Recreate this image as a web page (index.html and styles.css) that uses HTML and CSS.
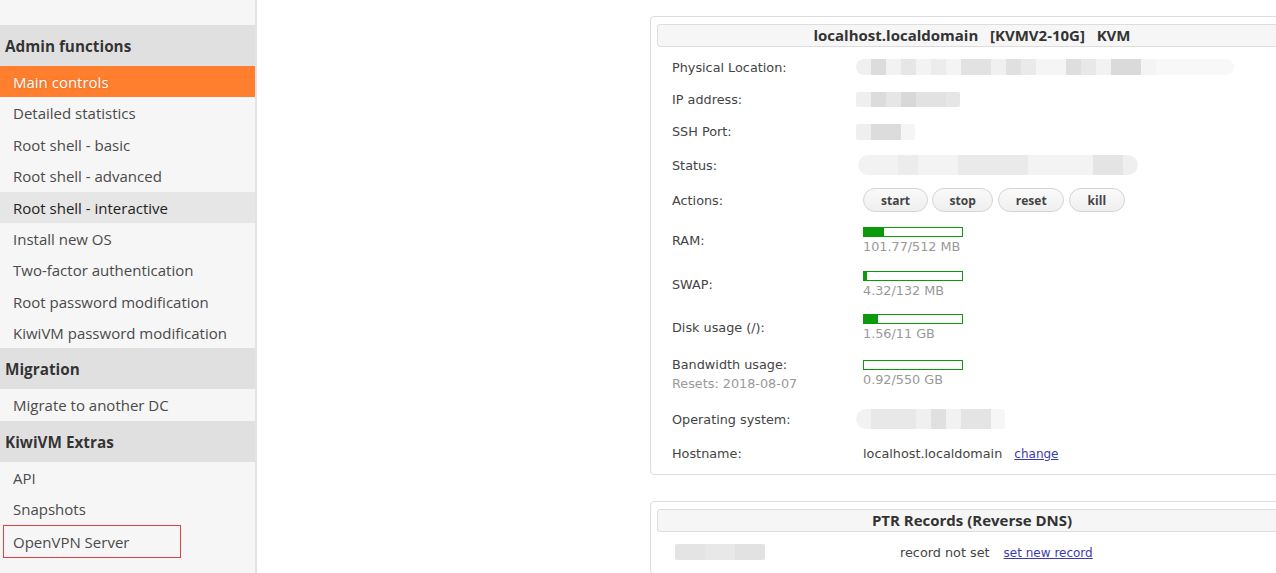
FILE: index.html
```html
<!DOCTYPE html>
<html>
<head>
<meta charset="utf-8">
<title>KiwiVM Control Panel</title>
<link rel="stylesheet" href="styles.css">
</head>
<body>
<div class="layout">
  <nav class="sidebar">
    <div class="side-top"></div>
    <div class="side-head">Admin functions</div>
    <a class="side-item active">Main controls</a>
    <a class="side-item">Detailed statistics</a>
    <a class="side-item">Root shell - basic</a>
    <a class="side-item">Root shell - advanced</a>
    <a class="side-item hover">Root shell - interactive</a>
    <a class="side-item">Install new OS</a>
    <a class="side-item">Two-factor authentication</a>
    <a class="side-item">Root password modification</a>
    <a class="side-item">KiwiVM password modification</a>
    <div class="side-head">Migration</div>
    <a class="side-item">Migrate to another DC</a>
    <div class="side-head">KiwiVM Extras</div>
    <a class="side-item">API</a>
    <a class="side-item">Snapshots</a>
    <a class="side-item marked">OpenVPN Server</a>
  </nav>
  <main class="content">
    <section class="panel">
      <div class="panel-head">localhost.localdomain&nbsp;&nbsp;&nbsp;[KVMV2-10G]&nbsp;&nbsp;&nbsp;KVM</div>
      <div class="rows">
        <div class="row r32"><div class="lbl">Physical Location:</div><div class="val"><span class="blur b-loc"></span></div></div>
        <div class="row r32"><div class="lbl">IP address:</div><div class="val"><span class="blur b-ip"></span></div></div>
        <div class="row r33"><div class="lbl">SSH Port:</div><div class="val"><span class="blur b-ssh"></span></div></div>
        <div class="row r34"><div class="lbl">Status:</div><div class="val"><span class="blur b-status"></span></div></div>
        <div class="row r36"><div class="lbl">Actions:</div>
          <div class="val btns">
            <button class="btn">start</button>
            <button class="btn">stop</button>
            <button class="btn">reset</button>
            <button class="btn">kill</button>
          </div>
        </div>
        <div class="row r45"><div class="lbl">RAM:</div>
          <div class="val"><div class="bar"><div class="fill" style="width:20%"></div></div><div class="muted">101.77/512 MB</div></div>
        </div>
        <div class="row r43"><div class="lbl">SWAP:</div>
          <div class="val"><div class="bar"><div class="fill" style="width:3%"></div></div><div class="muted">4.32/132 MB</div></div>
        </div>
        <div class="row r43"><div class="lbl">Disk usage (/):</div>
          <div class="val"><div class="bar"><div class="fill" style="width:14%"></div></div><div class="muted">1.56/11 GB</div></div>
        </div>
        <div class="row r48"><div class="lbl">Bandwidth usage:<div class="muted lbl-sub">Resets: 2018-08-07</div></div>
          <div class="val"><div class="bar"><div class="fill" style="width:0%"></div></div><div class="muted">0.92/550 GB</div></div>
        </div>
        <div class="row r42"><div class="lbl">Operating system:</div><div class="val"><span class="blur b-os"></span></div></div>
        <div class="row r27"><div class="lbl">Hostname:</div><div class="val">localhost.localdomain <a class="link">change</a></div></div>
      </div>
    </section>
    <section class="panel ptr">
      <div class="panel-head">PTR Records (Reverse DNS)</div>
      <div class="ptr-row">
        <span class="blur b-ptr"></span>
        <span class="ptr-text">record not set <a class="link">set new record</a></span>
      </div>
    </section>
  </main>
</div>
</body>
</html>
```

FILE: styles.css
```css
html, body {
  margin: 0;
  padding: 0;
  background: #fff;
  overflow: hidden;
}
body {
  font-family: "Open Sans", "Noto Sans", sans-serif;
  color: #444;
}
.layout {
  display: flex;
  min-height: 573px;
  width: 1276px;
  overflow: hidden;
}
.sidebar {
  width: 255px;
  flex: none;
  background: #f6f6f6;
  border-right: 2px solid #e3e3e3;
  display: flex;
  flex-direction: column;
  min-height: 573px;
}
.side-top { height: 25px; }
.side-head {
  height: 41px;
  line-height: 39px;
  padding-top: 2px;
  box-sizing: border-box;
  background: #e0e0e0;
  padding-left: 5px;
  font-weight: 700;
  font-size: 15.3px;
  color: #333;
  text-shadow: 0 0 1px rgba(255,255,255,.8);
}
.side-item {
  display: block;
  height: 31.375px;
  line-height: 29.375px;
  padding-top: 2px;
  padding-left: 13px;
  font-size: 15px;
  color: #4a4a4a;
  text-decoration: none;
  box-sizing: border-box;
}
.side-item.active {
  background: #ff7f2f;
  color: #fff;
  text-shadow: 0 0 2px rgba(120,50,0,.35);
}
.side-item.hover {
  background: #e6e6e6;
  color: #222;
}
.side-item.marked {
  width: 178px;
  margin-left: 3px;
  padding-left: 9px;
  border: 1px solid #e04040;
  height: 33px;
  line-height: 29px;
}
.content {
  flex: 1;
  padding: 16px 0 0 393px;
  min-width: 0;
}
.panel {
  width: 644px;
  border: 1px solid #ddd;
  border-radius: 4px;
  padding: 7px 6px 7px;
  box-sizing: border-box;
  background: #fff;
}
.panel-head {
  height: 23px;
  line-height: 21px;
  box-sizing: border-box;
  border: 1px solid #ddd;
  border-radius: 3px;
  background: #f6f6f6;
  text-align: center;
  font-weight: 700;
  font-size: 15px;
  color: #333;
}
.rows {
  padding-top: 4px;
  font-family: "DejaVu Sans", sans-serif;
  font-size: 12.8px;
  color: #444;
}
.row {
  display: flex;
  align-items: center;
}
.r27 { height: 27px; }
.r32 { height: 32px; }
.r33 { height: 33px; }
.r34 { height: 34px; }
.r36 { height: 36px; }
.r42 { height: 42px; }
.r43 { height: 43px; }
.r45 { height: 45px; }
.r48 { height: 49px; }
.lbl {
  width: 206px;
  padding-left: 15px;
  box-sizing: border-box;
  flex: none;
}
.lbl-sub { margin-top: 4px; }
.val { flex: 1; }
.muted { color: #999; }
.bar {
  width: 100px;
  height: 10px;
  box-sizing: border-box;
  border: 1px solid #0a9a0a;
  background: #fff;
  margin-bottom: 2px;
}
.fill {
  height: 100%;
  background: #0a9a0a;
}
.btns {
  display: flex;
  gap: 4px;
}
.btn {
  font-family: "Open Sans", "Noto Sans", sans-serif;
  font-weight: 700;
  font-size: 12px;
  color: #444;
  height: 24px;
  padding: 0 17px;
  border: 1px solid #d4d4d4;
  border-radius: 12px;
  background: linear-gradient(#fafafa, #efefef);
}
.btn:nth-child(2) { padding: 0 16.5px; }
.btn:nth-child(3) { padding: 0 16.5px; margin-left: 1px; }
.btn:nth-child(4) { padding: 0 17.5px; margin-left: 1px; }
.link {
  color: #3b3bb0;
  text-decoration: underline;
  font-size: 12px;
  margin-left: 8px;
}
.blur {
  display: block;
  height: 16px;
  border-radius: 8px;
  filter: blur(0.6px);
}
.b-loc {
  width: 378px;
  margin-left: -7px;
  background: linear-gradient(90deg, #f0f0f0 0 15px, #dcdcdc 15px 30px, #f2f2f2 30px 45px, #e6e6e6 45px 60px, #f3f3f3 60px 75px, #ececec 75px 90px, #f4f4f4 90px 105px, #e2e2e2 105px 135px, #f0f0f0 135px 150px, #e0e0e0 150px 165px, #eaeaea 165px 180px, #f5f5f5 180px 210px, #dedede 210px 225px, #e8e8e8 225px 240px, #f2f2f2 240px 255px, #dadada 255px 285px, #f4f4f4 285px 300px, #f8f8f8 300px 378px);
}
.b-ip {
  width: 104px;
  height: 15px;
  margin-left: -7px;
  border-radius: 2px;
  background: linear-gradient(90deg, #efefef 0 15px, #dcdcdc 15px 30px, #e6e6e6 30px 45px, #d8d8d8 45px 60px, #e2e2e2 60px 90px, #e6e6e6 90px 104px);
}
.b-ssh {
  width: 59px;
  margin-left: -7px;
  border-radius: 2px;
  background: linear-gradient(90deg, #efefef 0 15px, #dcdcdc 15px 45px, #f5f5f5 45px 59px);
}
.b-status {
  width: 280px;
  height: 20px;
  margin-left: -5px;
  border-radius: 10px;
  background: linear-gradient(90deg, #f2f2f2 0 40px, #ececec 40px 60px, #f3f3f3 60px 100px, #eaeaea 100px 170px, #f3f3f3 170px 235px, #e4e4e4 235px 265px, #efefef 265px 280px);
}
.b-os {
  width: 149px;
  height: 20px;
  margin-left: -7px;
  border-radius: 10px 2px 2px 10px;
  background: linear-gradient(90deg, #f2f2f2 0 15px, #e8e8e8 15px 60px, #f0f0f0 60px 75px, #e0e0e0 75px 90px, #f2f2f2 90px 105px, #e4e4e4 105px 135px, #f6f6f6 135px 149px);
}
.ptr {
  margin-top: 26px;
  height: 73px;
}
.ptr-row {
  display: flex;
  align-items: center;
  height: 40px;
  font-family: "DejaVu Sans", sans-serif;
  font-size: 12.8px;
  color: #444;
}
.b-ptr {
  width: 90px;
  height: 16px;
  margin-left: 18px;
  border-radius: 2px;
  background: linear-gradient(90deg, #e4e4e4 0 30px, #e8e8e8 30px 60px, #e2e2e2 60px 90px);
}
.ptr-text {
  margin-left: 135px;
}
.ptr-text .link { margin-left: 10px; }
```
